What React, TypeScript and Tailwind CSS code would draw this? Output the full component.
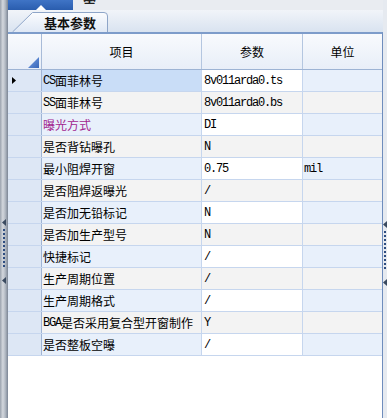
const rows = [
  { name: 'CS面菲林号', val: '8v011arda0.ts', unit: '' },
  { name: 'SS面菲林号', val: '8v011arda0.bs', unit: '' },
  { name: '曝光方式', val: 'DI', unit: '', purple: true },
  { name: '是否背钻曝孔', val: 'N', unit: '' },
  { name: '最小阻焊开窗', val: '0.75', unit: 'mil' },
  { name: '是否阻焊返曝光', val: '/', unit: '' },
  { name: '是否加无铅标记', val: 'N', unit: '' },
  { name: '是否加生产型号', val: 'N', unit: '' },
  { name: '快捷标记', val: '/', unit: '' },
  { name: '生产周期位置', val: '/', unit: '' },
  { name: '生产周期格式', val: '/', unit: '' },
  { name: 'BGA是否采用复合型开窗制作', val: 'Y', unit: '' },
  { name: '是否整板空曝', val: '/', unit: '' },
];

const mono = "font-['Liberation_Mono',monospace] text-[12px] tracking-[-1.2px]";

function Mixed({ text }: { text: string }) {
  const parts = text.split(/([A-Za-z0-9./]+)/).filter(Boolean);
  return (
    <>
      {parts.map((p, i) =>
        /^[A-Za-z0-9./]+$/.test(p) ? (
          <span key={i} className={mono}>
            {p}
          </span>
        ) : (
          <span key={i}>{p}</span>
        ),
      )}
    </>
  );
}

function Splitter({ wide }: { wide?: boolean }) {
  return (
    <div
      className={
        wide
          ? 'w-[8px] shrink-0 flex flex-col items-center pt-[219px] bg-[linear-gradient(to_right,#9aa2ad,#d3d7dd_35%,#b3bac4_65%,#7b8594)]'
          : 'w-[4px] shrink-0 flex flex-col items-center pt-[221px] bg-[#e6eaf0]'
      }
    >
      <svg width="4" height="7" viewBox="0 0 4 7">
        <polygon points="4,0 0,3.5 4,7" fill="#3a4a60" />
      </svg>
      <div className="mt-[3px] h-[40px] w-[2px] bg-[repeating-linear-gradient(to_bottom,#2d4c80_0px,#2d4c80_2px,transparent_2px,transparent_4px)]" />
      <svg className="mt-[8px]" width="4" height="7" viewBox="0 0 4 7">
        <polygon points="4,0 0,3.5 4,7" fill="#3a4a60" />
      </svg>
    </div>
  );
}

function Tab() {
  return (
    <div className="relative ml-[4px] w-[97px] h-[21px]">
      <svg className="absolute inset-0" width="97" height="21" viewBox="0 0 97 21">
        <defs>
          <linearGradient id="tabg" x1="0" y1="0" x2="0" y2="1">
            <stop offset="0" stopColor="#fbfcfe" />
            <stop offset="1" stopColor="#dfe8f5" />
          </linearGradient>
        </defs>
        <path d="M0.5 21 L20.5 1.5 L92 1.5 Q95.5 1.5 95.5 5 L95.5 21" fill="url(#tabg)" stroke="#8ea5c8" />
      </svg>
      <div className="relative h-full flex items-center pl-[32px] pt-[2px] text-[13px] font-bold text-[#111]">基本参数</div>
    </div>
  );
}

export default function App() {
  return (
    <div className="w-[387px] h-[418px] flex overflow-hidden bg-white font-['Noto_Sans_CJK_SC',sans-serif] text-[12px] text-black">
      <Splitter wide />
      <div className="flex-1 flex flex-col min-w-0">
        <div className="h-[10px] flex bg-[#e9ecf1]">
          <div className="w-[65px] flex justify-center items-end bg-[linear-gradient(to_bottom,#3f74c6,#2a5dae)]">
            <svg width="10" height="5" viewBox="0 0 10 5">
              <polygon points="5,0 10,5 0,5" fill="#ffffff" />
            </svg>
          </div>
          <div className="ml-[10px] h-[10px] overflow-hidden">
            <div className="mt-[-10px] text-[13px] font-bold leading-[14px] text-[#222]">基</div>
          </div>
        </div>
        <div className="h-[22px] flex items-end bg-[linear-gradient(to_bottom,#f1f4f9,#d9e3f0)]">
          <Tab />
        </div>
        <div className="flex-1 flex flex-col border-t-2 border-t-[#7d9cca] border-r border-r-[#6f8dbd] bg-white">
          <div className="h-[36px] flex border-b border-b-[#9db3d4] bg-[linear-gradient(to_bottom,#f8fafd,#e8eef8)]">
            <div className="w-[34px] shrink-0 flex items-end justify-end pr-[2px] pb-[1px] border-r border-r-[#a8bbd8]">
              <svg width="11" height="11" viewBox="0 0 11 11">
                <defs>
                  <linearGradient id="cornerg" x1="0" y1="0" x2="1" y2="1">
                    <stop offset="0" stopColor="#7aa3e6" />
                    <stop offset="1" stopColor="#3665b8" />
                  </linearGradient>
                </defs>
                <polygon points="11,0 11,11 0,11" fill="url(#cornerg)" />
              </svg>
            </div>
            <div className="w-[160px] shrink-0 flex items-center justify-center border-r border-r-[#b4c6e0]">项目</div>
            <div className="w-[101px] shrink-0 flex items-center justify-center border-r border-r-[#b4c6e0]">参数</div>
            <div className="flex-1 flex items-center justify-center">单位</div>
          </div>
          {rows.map((r, i) => {
            const odd = i % 2 === 0;
            const side = i === 0 ? 'bg-[#c9ddf7]' : odd ? 'bg-[#e8f0fb]' : 'bg-[#f3f3f3]';
            const unitBg = odd ? 'bg-[#e8f0fb]' : 'bg-[#f3f3f3]';
            const valBg = odd ? 'bg-white' : 'bg-[#f3f3f3]';
            return (
              <div key={i} className="h-[22px] flex border-b border-b-[#c6d6ee]">
                <div className="w-[34px] shrink-0 flex items-center pl-[4px] border-r border-r-[#9fb4d4] bg-[#dde7f5]">
                  {i === 0 && (
                    <svg width="4" height="7" viewBox="0 0 4 7">
                      <polygon points="0,0 4,3.5 0,7" fill="#000" />
                    </svg>
                  )}
                </div>
                <div
                  className={`w-[160px] shrink-0 flex items-center pl-[1px] whitespace-nowrap overflow-hidden border-r border-r-[#c6d6ee] ${side} ${
                    r.purple ? 'text-[#a3258f]' : 'text-black'
                  }`}
                >
                  <Mixed text={r.name} />
                </div>
                <div className={`w-[101px] shrink-0 flex items-center pl-[2px] border-r border-r-[#c6d6ee] ${valBg}`}>
                  <span className={mono}>{r.val}</span>
                </div>
                <div className={`flex-1 flex items-center pl-[1px] ${unitBg}`}>
                  <span className={mono}>{r.unit}</span>
                </div>
              </div>
            );
          })}
          <div className="flex-1 bg-white" />
        </div>
      </div>
      <Splitter />
    </div>
  );
}
